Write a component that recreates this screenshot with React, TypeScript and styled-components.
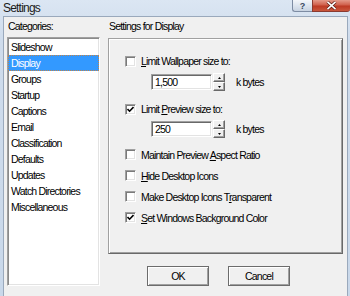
import React from "react";
import styled, { createGlobalStyle } from "styled-components";

const GlobalStyle = createGlobalStyle`
  html, body {
    margin: 0;
    padding: 0;
    background: #d6e2f0;
  }
  * {
    box-sizing: border-box;
  }
`;

const uiFont = `"Liberation Sans", Arial, sans-serif`;

const Window = styled.div`
  width: 350px;
  height: 296px;
  background: linear-gradient(#dbe6f3, #cfdcec 40px, #c9d8ea);
  display: flex;
  flex-direction: column;
  font-family: ${uiFont};
  font-size: 10.5px;
  letter-spacing: -0.8px;
  color: #000;
  overflow: hidden;
`;

const TitleBar = styled.div`
  height: 18px;
  display: flex;
  align-items: flex-start;
  padding-left: 3px;
`;

const Title = styled.div`
  font-size: 12px;
  letter-spacing: -0.8px;
  line-height: 15px;
  color: #1b1b1b;
  margin-top: 1px;
`;

const CaptionButtons = styled.div`
  margin-left: auto;
  display: flex;
`;

const HelpButton = styled.div`
  width: 20px;
  height: 12px;
  border: 1px solid #7d8ca3;
  border-top: none;
  border-right: none;
  border-bottom-left-radius: 3px;
  background: linear-gradient(#f3f6fa, #dde5ef 50%, #c8d3e1);
  display: flex;
  align-items: center;
  justify-content: center;
  font-size: 9px;
  font-weight: bold;
  letter-spacing: 0;
  color: #3a4a60;
`;

const CloseButton = styled.div`
  width: 38px;
  height: 12px;
  border: 1px solid #8a3a30;
  border-top: none;
  border-right: none;
  border-bottom-right-radius: 3px;
  background: linear-gradient(#e49a8a, #d0604c 45%, #bd3a24 55%, #c9563c);
  display: flex;
  align-items: center;
  justify-content: center;
`;

const Body = styled.div`
  flex: 1;
  margin: 0 2px 5px 3px;
  border: 1px solid #9aa9bc;
  background: #f0f0f0;
  display: flex;
  gap: 8px;
  padding: 0 4px 10px 3px;
`;

const LeftColumn = styled.div`
  width: 93px;
  display: flex;
  flex-direction: column;
`;

const RightColumn = styled.div`
  flex: 1;
  display: flex;
  flex-direction: column;
`;

const Caption = styled.div<{ $indent?: number }>`
  line-height: 13px;
  margin-top: 3px;
  padding-left: ${(p) => p.$indent ?? 0}px;
`;

const ListBox = styled.div`
  flex: 1;
  margin-top: 4px;
  background: #fff;
  border: 1px solid;
  border-color: #a0a0a0 #ffffff #ffffff #a0a0a0;
  box-shadow: inset 1px 1px 0 #8a8a8a, inset -1px -1px 0 #e3e3e3;
  padding-top: 1px;
`;

const ListItem = styled.div<{ $selected?: boolean }>`
  height: 16px;
  line-height: 16px;
  padding-left: 3px;
  white-space: nowrap;
  background: ${(p) => (p.$selected ? "#3399ff" : "transparent")};
  color: ${(p) => (p.$selected ? "#fff" : "#000")};
  outline: ${(p) => (p.$selected ? "1px dotted #c0844a" : "none")};
  outline-offset: -1px;
`;

const Panel = styled.div`
  height: 216px;
  margin-top: 5px;
  border: 1px solid;
  border-color: #a0a0a0 #696969 #696969 #a0a0a0;
  box-shadow: inset 1px 1px 0 #ffffff, inset -1px -1px 0 #a0a0a0;
  padding-top: 12px;
  display: flex;
  flex-direction: column;
`;

const CheckRow = styled.div<{ $h?: number; $mt?: number }>`
  height: ${(p) => p.$h ?? 20}px;
  margin-top: ${(p) => p.$mt ?? 0}px;
  display: flex;
  align-items: center;
  padding-left: 16px;
  white-space: nowrap;
`;

const Box = styled.div`
  width: 11px;
  height: 11px;
  background: #fff;
  border: 1px solid;
  border-color: #a0a0a0 #ffffff #ffffff #a0a0a0;
  box-shadow: inset 1px 1px 0 #7a7a7a, inset -1px -1px 0 #e3e3e3;
  margin-right: 5px;
  display: flex;
  align-items: center;
  justify-content: center;
  flex: none;
`;

const Mn = styled.span`
  text-decoration: underline;
`;

const SpinRow = styled.div<{ $mt?: number }>`
  height: 18px;
  margin-top: ${(p) => p.$mt ?? 0}px;
  display: flex;
  align-items: center;
  padding-left: 42px;
`;

const TextInput = styled.div`
  width: 61px;
  height: 16px;
  background: #fff;
  border: 1px solid;
  border-color: #a0a0a0 #ffffff #ffffff #a0a0a0;
  box-shadow: inset 1px 1px 0 #696969, inset -1px -1px 0 #e3e3e3;
  padding-left: 3px;
  line-height: 14px;
`;

const Spinner = styled.div`
  width: 12px;
  height: 18px;
  display: flex;
  flex-direction: column;
  margin-left: 1px;
`;

const SpinHalf = styled.div`
  flex: 1;
  background: #f0f0f0;
  border: 1px solid;
  border-color: #ffffff #696969 #696969 #ffffff;
  box-shadow: inset -1px -1px 0 #a0a0a0;
  display: flex;
  align-items: center;
  justify-content: center;
`;

const Unit = styled.span`
  margin-left: 11px;
`;

const ButtonRow = styled.div`
  display: flex;
  gap: 19px;
  padding-left: 39px;
  margin-top: 12px;
`;

const PushButton = styled.div`
  width: 62px;
  height: 20px;
  border: 1px solid #6c6c6c;
  background: #f0f0f0;
  box-shadow: inset 1px 1px 0 #ffffff, inset -1px -1px 0 #a0a0a0;
  display: flex;
  align-items: center;
  justify-content: center;
`;

const CheckMark = () => (
  <svg width="7" height="7" viewBox="0 0 7 7">
    <path d="M0.5 3 L2.6 5.2 L6.5 1" fill="none" stroke="#000" strokeWidth="1.6" />
  </svg>
);

const Arrow = ({ up }: { up?: boolean }) => (
  <svg width="3" height="2" viewBox="0 0 3 2">
    <polygon points={up ? "1.5,0 3,2 0,2" : "0,0 3,0 1.5,2"} fill="#000" />
  </svg>
);

const CheckBox = ({ checked }: { checked?: boolean }) => (
  <Box>{checked && <CheckMark />}</Box>
);

const Spin = ({ value }: { value: string }) => (
  <>
    <TextInput>{value}</TextInput>
    <Spinner>
      <SpinHalf>
        <Arrow up />
      </SpinHalf>
      <SpinHalf>
        <Arrow />
      </SpinHalf>
    </Spinner>
    <Unit>k bytes</Unit>
  </>
);

const categories = [
  "Slideshow",
  "Display",
  "Groups",
  "Startup",
  "Captions",
  "Email",
  "Classification",
  "Defaults",
  "Updates",
  "Watch Directories",
  "Miscellaneous",
];

export default function App() {
  return (
    <>
      <GlobalStyle />
      <Window>
        <TitleBar>
          <Title>Settings</Title>
          <CaptionButtons>
            <HelpButton>?</HelpButton>
            <CloseButton>
              <svg width="11" height="9" viewBox="0 0 11 9">
                <path d="M1.5 0.8 L9.5 8.2 M9.5 0.8 L1.5 8.2" stroke="#5a1a12" strokeWidth="3" />
                <path d="M1.5 0.8 L9.5 8.2 M9.5 0.8 L1.5 8.2" stroke="#fff" strokeWidth="1.6" />
              </svg>
            </CloseButton>
          </CaptionButtons>
        </TitleBar>
        <Body>
          <LeftColumn>
            <Caption $indent={1}>Categories:</Caption>
            <ListBox>
              {categories.map((c) => (
                <ListItem key={c} $selected={c === "Display"}>
                  {c}
                </ListItem>
              ))}
            </ListBox>
          </LeftColumn>
          <RightColumn>
            <Caption $indent={1}>Settings for Display</Caption>
            <Panel>
              <CheckRow>
                <CheckBox />
                <span>
                  <Mn>L</Mn>imit Wallpaper size to:
                </span>
              </CheckRow>
              <SpinRow $mt={2}>
                <Spin value="1,500" />
              </SpinRow>
              <CheckRow $mt={8}>
                <CheckBox checked />
                <span>
                  Limit <Mn>P</Mn>review size to:
                </span>
              </CheckRow>
              <SpinRow $mt={1}>
                <Spin value="250" />
              </SpinRow>
              <CheckRow $mt={6} $h={21}>
                <CheckBox />
                <span>
                  Maintain Preview <Mn>A</Mn>spect Ratio
                </span>
              </CheckRow>
              <CheckRow $h={21}>
                <CheckBox />
                <span>
                  <Mn>H</Mn>ide Desktop Icons
                </span>
              </CheckRow>
              <CheckRow $h={21}>
                <CheckBox />
                <span>
                  Make Desktop Icons T<Mn>r</Mn>ansparent
                </span>
              </CheckRow>
              <CheckRow $h={21}>
                <CheckBox checked />
                <span>
                  <Mn>S</Mn>et Windows Background Color
                </span>
              </CheckRow>
            </Panel>
            <ButtonRow>
              <PushButton>OK</PushButton>
              <PushButton>Cancel</PushButton>
            </ButtonRow>
          </RightColumn>
        </Body>
      </Window>
    </>
  );
}
